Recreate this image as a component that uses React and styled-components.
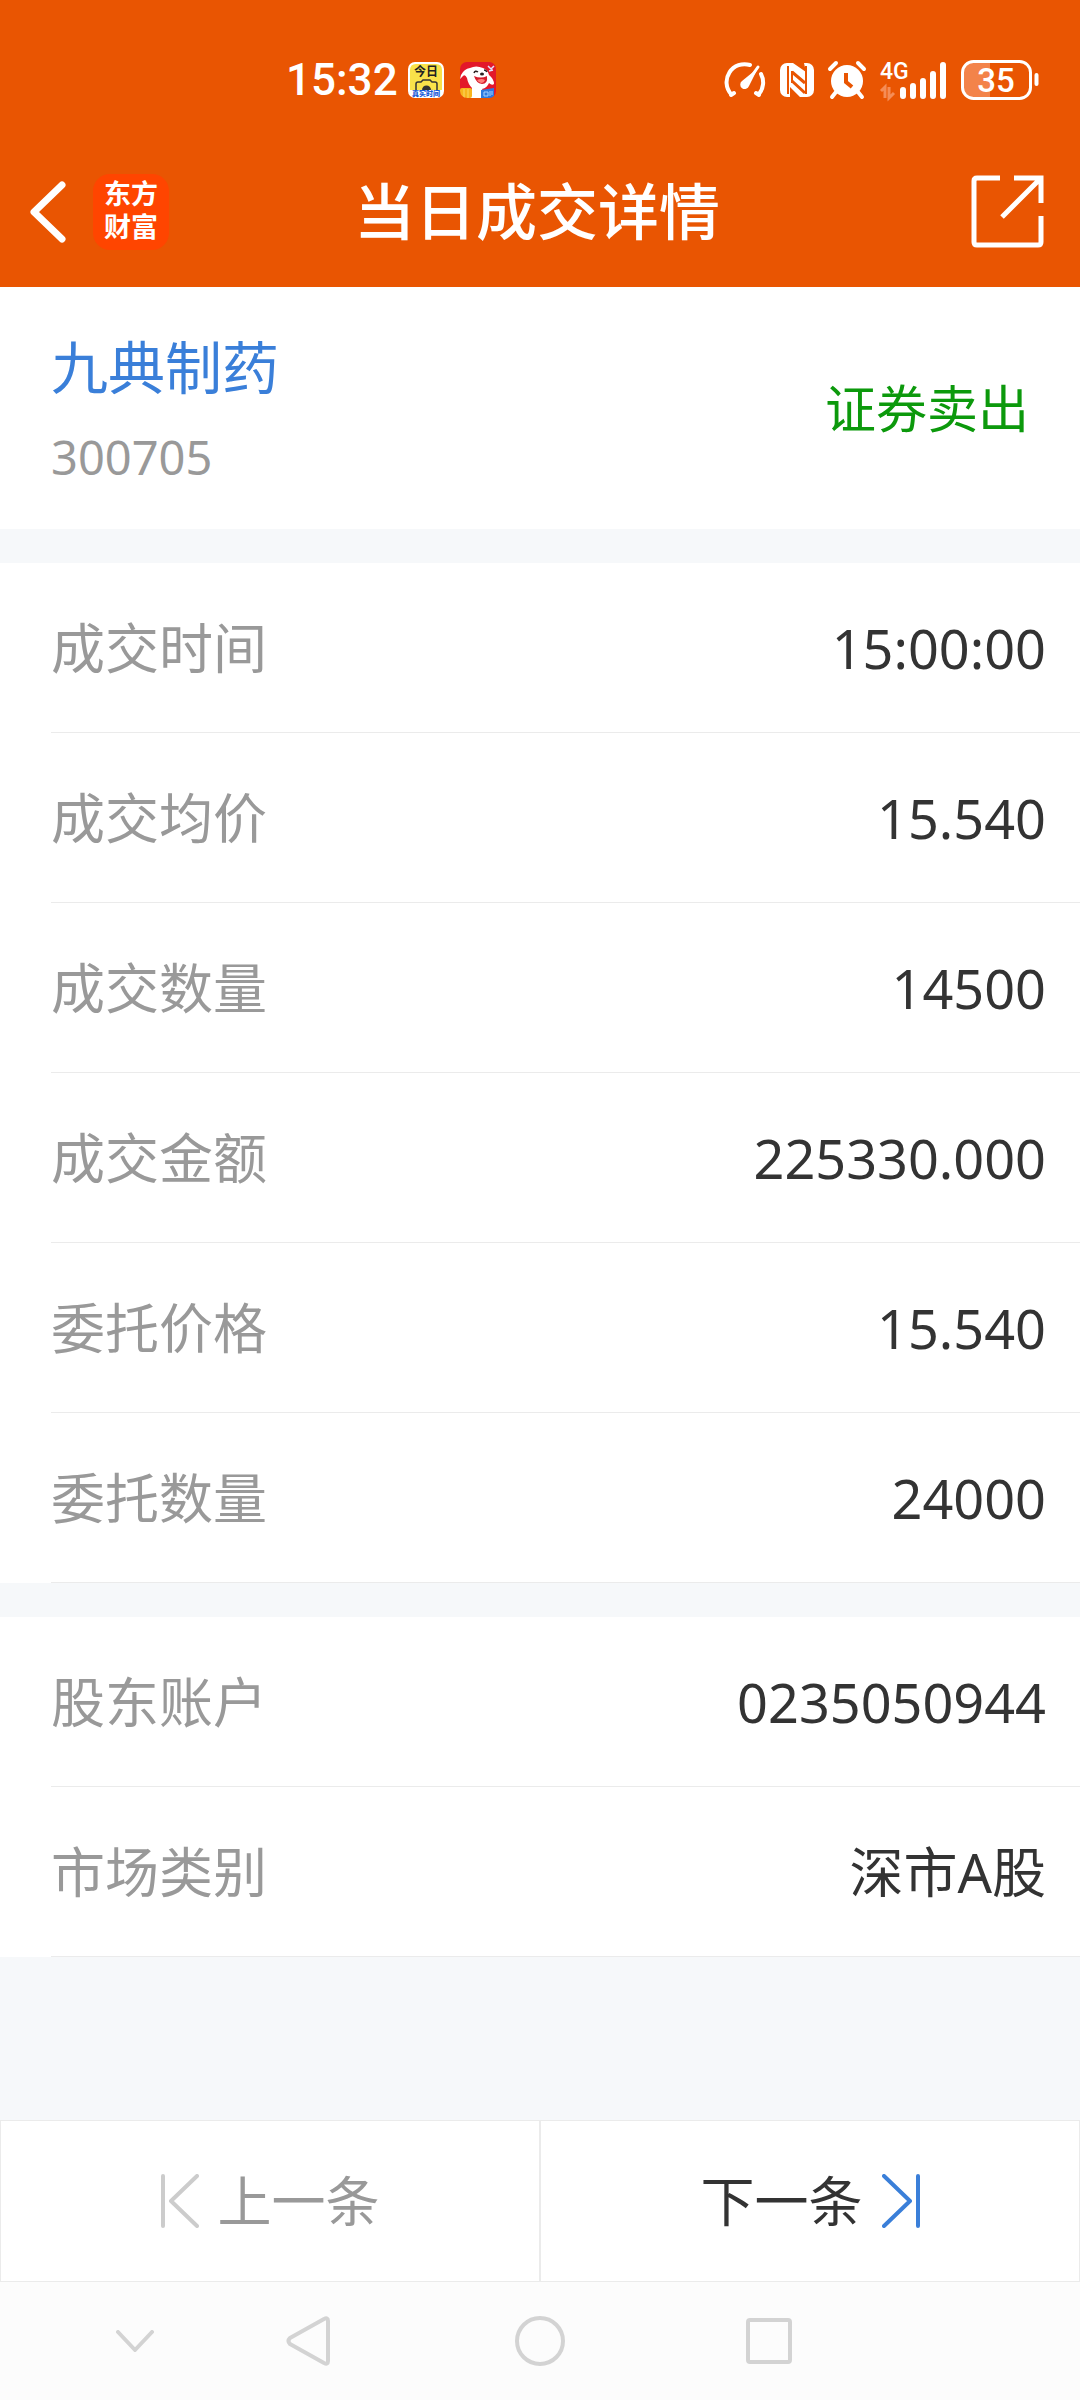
import React from "react";
import styled, { createGlobalStyle } from "styled-components";

const GlobalStyle = createGlobalStyle`
  *, *::before, *::after { box-sizing: border-box; }
  body {
    margin: 0;
    background: #f6f8fa;
    color: #333;
    font-family: "Noto Sans", "Noto Sans CJK SC", sans-serif;
  }
  button { font: inherit; }
`;

const Page = styled.div`
  min-height: 100vh;
  display: flex;
  flex-direction: column;
`;

const Top = styled.header`
  background: #e95502;
  color: #fff;
`;

const StatusBar = styled.div`
  height: 136px;
  padding: 24px 40px 0 286px;
  display: flex;
  align-items: center;
  justify-content: space-between;
`;

const StatusGroup = styled.div`
  display: flex;
  align-items: center;
  gap: ${(p) => p.$gap}px;
  svg { display: block; overflow: visible; }
`;

const Clock = styled.time`
  font-family: Roboto, "Noto Sans", sans-serif;
  font-size: 44px;
  line-height: 48px;
  font-weight: 500;
`;

const TitleBar = styled.div`
  height: 151px;
  padding: 0 36px 0 30px;
  display: grid;
  grid-template-columns: 1fr auto 1fr;
  align-items: center;
`;

const TitleSide = styled.div`
  display: flex;
  align-items: center;
  gap: 27px;
  justify-content: ${(p) => (p.$end ? "flex-end" : "flex-start")};
`;

const Title = styled.h1`
  margin: 0;
  font-size: 61px;
  line-height: 72px;
  font-weight: 500;
`;

const IconButton = styled.button`
  display: flex;
  align-items: center;
  justify-content: center;
  padding: 0;
  border: 0;
  background: none;
  color: inherit;
  cursor: pointer;
  svg { display: block; }
`;

const Brand = styled.a`
  width: 76px;
  height: 76px;
  padding: 2px 10px;
  border-radius: 17px;
  background: #ff4500;
  color: #fff;
  text-decoration: none;
  text-align: center;
  font-family: "Noto Sans CJK SC", sans-serif;
  font-size: 27px;
  line-height: 33px;
  font-weight: 700;
`;

const Main = styled.main`
  flex: 1;
  display: flex;
  flex-direction: column;
  gap: 34px;
`;

const Summary = styled.section`
  height: 242px;
  padding: 0 51px;
  background: #fff;
  display: flex;
  align-items: center;
  justify-content: space-between;
`;

const Stock = styled.div`
  display: flex;
  flex-direction: column;
  gap: 18px;
  padding-top: 8px;
`;

const StockName = styled.h2`
  margin: 0;
  font-size: 57px;
  line-height: 72px;
  font-weight: 400;
  color: #3a7fd9;
`;

const StockCode = styled.div`
  font-size: 47px;
  line-height: 72px;
  color: #999;
`;

const Side = styled.div`
  font-size: 51px;
  line-height: 72px;
  color: #0c990c;
`;

const List = styled.dl`
  margin: 0;
  padding-left: 51px;
  background: #fff;
`;

const Row = styled.div`
  height: 170px;
  padding-right: 34px;
  border-bottom: 1px solid #ebebeb;
  display: flex;
  align-items: center;
  justify-content: space-between;
  font-size: 54px;
  line-height: 72px;
`;

const Label = styled.dt`
  color: #999;
`;

const Value = styled.dd`
  margin: 0;
`;

const Pager = styled.div`
  display: grid;
  grid-template-columns: 1fr 1fr;
`;

const PagerButton = styled.button`
  height: 162px;
  padding: 0;
  border: 1px solid #ebebeb;
  background: #fff;
  display: flex;
  align-items: center;
  justify-content: center;
  gap: 19px;
  font-size: 54px;
  line-height: 72px;
  color: #333;
  cursor: pointer;
  &:disabled { color: #999; cursor: default; }
`;

const SystemNav = styled.nav`
  height: 118px;
  padding-left: 4.5%;
  background: #fcfcfc;
  color: #d3d3d3;
  display: grid;
  grid-template-columns: 16fr 16fr 27fr 15.5fr 21fr;
  align-items: center;
`;

const WatermarkCameraIcon = () => (
  <svg width="36" height="36" viewBox="0 0 36 36" aria-hidden="true">
    <rect width="36" height="36" rx="7" fill="#fff" />
    <path d="M2 28V8Q2 2 8 2H28Q34 2 34 8V28Z" fill="#f9e24a" />
    <text x="18" y="14" textAnchor="middle" fontSize="12" fontWeight="700" fill="#222" fontFamily="Noto Sans CJK SC, sans-serif">今日</text>
    <path d="M8 28V22Q8 20 10 20H13L15 18H22L24 20H27Q29 20 29 22V28" fill="none" stroke="#333" strokeWidth="1.500" />
    <path d="M14 28A4.500 4.500 0 0 1 23 28Z" fill="#333" />
    <text x="18" y="34" textAnchor="middle" fontSize="7" fontWeight="900" fill="#1758d8" fontFamily="Noto Sans CJK SC, sans-serif">真实时间</text>
  </svg>
);

const PuppyIcon = () => (
  <svg width="36" height="36" viewBox="0 0 36 36" aria-hidden="true">
    <defs>
      <clipPath id="puppy-tile"><rect width="36" height="36" rx="7" /></clipPath>
    </defs>
    <g clipPath="url(#puppy-tile)">
      <rect width="36" height="36" fill="#e3182a" />
      <path d="M1 13Q4 7 10 6Q16 3 23 6Q28 8 29 13Q34 17 34 22Q32 24 29 21Q27 26 22 27L26 36H10L12 26Q8 22 7 16Q5 12 3 14L0 17Z" fill="#fff" />
      <path d="M14 14Q21 17 27 14Q28 22 22 22Q16 21 14 14Z" fill="#d51c2c" />
      <path d="M17 18Q22 16 25 18Q24 21 21 21Q18 20 17 18Z" fill="#ff7d78" />
      <path d="M14 11Q15 8 18 10M24 8Q26 8 27 10" fill="none" stroke="#2a2020" strokeWidth="1.500" />
      <ellipse cx="22" cy="12" rx="2" ry="1.500" fill="#2a2020" />
      <path d="M28 4L31 7L34 4M29 9L33 8" fill="none" stroke="#dfe4ff" strokeWidth="1.500" />
      <rect y="26" width="12" height="10" rx="2" fill="#f8b51d" />
      <path d="M4 27V36M8 27V36" stroke="#fbd867" strokeWidth="1" />
      <path d="M21 28L34 26V36H21Z" fill="#2d7ae0" />
      <path d="M24 30H28V34H24ZM30 29V34M32 29V33" fill="none" stroke="#a9d2ff" strokeWidth="1" />
    </g>
  </svg>
);

const GaugeIcon = () => (
  <svg width="42" height="38" viewBox="0 0 42 38" fill="none" stroke="#fff" strokeLinecap="round" aria-hidden="true">
    <path d="M7 34L10 32M35 34L32 32M7 33A18 18 0 0 1 26 4M37 13A18 18 0 0 1 35 33" strokeWidth="4" />
    <path d="M34 6L22 23" strokeWidth="3" />
    <path d="M34 7L25 25A4.500 4.500 0 1 1 18 20Z" fill="#fff" stroke="none" />
  </svg>
);

const NfcIcon = () => (
  <svg width="34" height="34" viewBox="0 0 34 34" aria-hidden="true">
    <rect width="34" height="34" rx="7" fill="#fff" />
    <path d="M8 3V31M26 3V31" stroke="#e95502" strokeWidth="2" />
    <path d="M13 0H24L26 9ZM10 34V24L20 34Z" fill="#e95502" />
    <path d="M12 9L25 20M12 18L25 30" stroke="#e95502" strokeWidth="3" />
    <path d="M12 8V20" stroke="#e95502" strokeWidth="2" />
  </svg>
);

const AlarmIcon = () => (
  <svg width="38" height="38" viewBox="0 0 38 38" aria-hidden="true">
    <circle cx="19" cy="20" r="16" fill="#fff" />
    <path d="M2 8L8 2M36 8L30 2M8 31L4 36M30 31L34 36" stroke="#fff" strokeWidth="4" strokeLinecap="round" />
    <path d="M18 12V21L24 26" fill="none" stroke="#e95502" strokeWidth="4" />
  </svg>
);

const SignalIcon = () => (
  <svg width="67" height="38" viewBox="0 0 67 38" aria-hidden="true">
    <text x="0" y="18" fontSize="23" fontWeight="500" fill="#fff" fontFamily="Roboto, sans-serif">4G</text>
    <path d="M1 30L5 26V37M9 26V37L14 32" fill="none" stroke="#f58d57" strokeWidth="3" />
    <path d="M23 29V35M33 25V35M43 20V35M53 13V35M63 4V35" stroke="#fff" strokeWidth="6" strokeLinecap="round" />
  </svg>
);

const BatteryIcon = () => (
  <svg width="79" height="40" viewBox="0 0 79 40" role="img" aria-label="35%">
    <path d="M29 2V38H12Q2 38 2 28V12Q2 2 12 2Z" fill="#f3834a" />
    <rect x="1.500" y="1.500" width="68" height="37" rx="11" fill="none" stroke="#fff" strokeWidth="3" />
    <path d="M75.500 15V24" stroke="#fff" strokeWidth="4" strokeLinecap="round" />
    <text x="35" y="32" textAnchor="middle" fontSize="33" fontWeight="500" fill="#fff" fontFamily="Roboto, sans-serif">35</text>
  </svg>
);

const BackIcon = () => (
  <svg width="36" height="62" viewBox="0 0 36 62" fill="none" stroke="currentColor" strokeWidth="7" strokeLinecap="round" strokeLinejoin="round" aria-hidden="true">
    <path d="M32 4L4 31L32 58" />
  </svg>
);

const ShareIcon = () => (
  <svg width="73" height="73" viewBox="0 0 73 73" fill="none" stroke="currentColor" strokeWidth="5" aria-hidden="true">
    <path d="M29 3H6Q3 3 3 6V67Q3 70 6 70H67Q70 70 70 67V41M43 3H70V28M69 4L31 42" />
  </svg>
);

const EdgeArrow = ({ color, flip }) => (
  <svg width="38" height="54" viewBox="0 0 38 54" fill="none" stroke={color} strokeWidth="4" strokeLinecap="round" strokeLinejoin="round" aria-hidden="true">
    <path d={flip ? "M2 2L28 27L2 52M36 2V52" : "M2 2V52M36 2L10 27L36 52"} />
  </svg>
);

const NavIcon = ({ width, height, d }) => (
  <svg width={width} height={height} viewBox={`0 0 ${width} ${height}`} fill="none" stroke="currentColor" strokeWidth="4" strokeLinecap="round" strokeLinejoin="round" aria-hidden="true">
    <path d={d} />
  </svg>
);

const dealRows = [
  ["成交时间", "15:00:00"],
  ["成交均价", "15.540"],
  ["成交数量", "14500"],
  ["成交金额", "225330.000"],
  ["委托价格", "15.540"],
  ["委托数量", "24000"],
];

const accountRows = [
  ["股东账户", "0235050944"],
  ["市场类别", "深市A股"],
];

const navItems = [
  { label: "收起", width: 38, height: 22, d: "M2 2L19 20L36 2" },
  { label: "返回", width: 44, height: 50, d: "M38 3Q42 1 42 5V45Q42 49 38 47L4 28Q1 25 4 22Z" },
  { label: "主屏幕", width: 50, height: 50, d: "M25 2A23 23 0 1 1 25 48A23 23 0 1 1 25 2Z" },
  { label: "最近任务", width: 46, height: 46, d: "M4 2H42Q44 2 44 4V42Q44 44 42 44H4Q2 44 2 42V4Q2 2 4 2Z" },
];

const DetailList = ({ rows }) => (
  <List>
    {rows.map(([label, value]) => (
      <Row key={label}>
        <Label>{label}</Label>
        <Value>{value}</Value>
      </Row>
    ))}
  </List>
);

export default function App() {
  return (
    <Page lang="zh-CN">
      <GlobalStyle />
      <Top>
        <StatusBar>
          <StatusGroup $gap={10}>
            <Clock>15:32</Clock>
            <StatusGroup $gap={16}>
              <WatermarkCameraIcon />
              <PuppyIcon />
            </StatusGroup>
          </StatusGroup>
          <StatusGroup $gap={14}>
            <GaugeIcon />
            <NfcIcon />
            <AlarmIcon />
            <SignalIcon />
            <BatteryIcon />
          </StatusGroup>
        </StatusBar>
        <TitleBar>
          <TitleSide>
            <IconButton aria-label="返回上一页"><BackIcon /></IconButton>
            <Brand href="#">东方财富</Brand>
          </TitleSide>
          <Title>当日成交详情</Title>
          <TitleSide $end>
            <IconButton aria-label="分享"><ShareIcon /></IconButton>
          </TitleSide>
        </TitleBar>
      </Top>
      <Main>
        <Summary>
          <Stock>
            <StockName>九典制药</StockName>
            <StockCode>300705</StockCode>
          </Stock>
          <Side>证券卖出</Side>
        </Summary>
        <DetailList rows={dealRows} />
        <DetailList rows={accountRows} />
      </Main>
      <Pager>
        <PagerButton disabled>
          <EdgeArrow color="#ccc" />
          上一条
        </PagerButton>
        <PagerButton>
          下一条
          <EdgeArrow color="#3a7fd9" flip />
        </PagerButton>
      </Pager>
      <SystemNav>
        {navItems.map(({ label, ...icon }) => (
          <IconButton key={label} aria-label={label}>
            <NavIcon {...icon} />
          </IconButton>
        ))}
      </SystemNav>
    </Page>
  );
}
